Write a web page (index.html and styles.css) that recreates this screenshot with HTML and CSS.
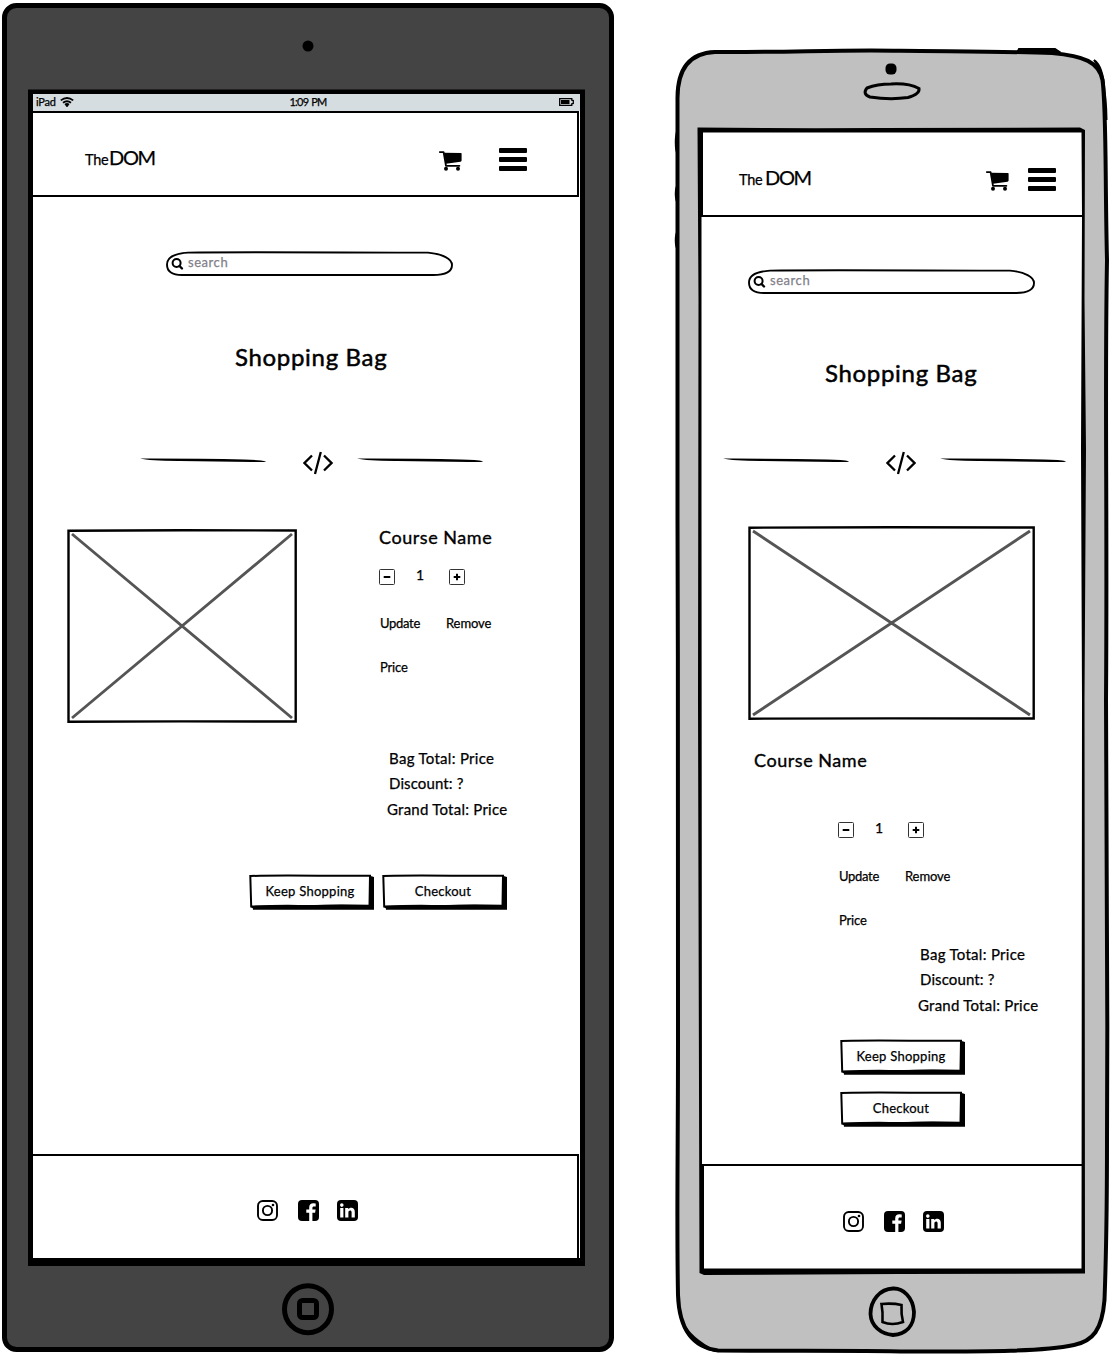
FILE: index.html
```html
<!DOCTYPE html>
<html lang="en">
<head>
<meta charset="utf-8">
<title>TheDOM - Shopping Bag</title>
<link rel="stylesheet" href="styles.css">
</head>
<body>
<svg class="sprite" aria-hidden="true">
  <symbol id="cart" viewBox="0 0 23 20">
    <path d="M0.8 1.1H4.6L7 14.8H20.4" fill="none" stroke="#000" stroke-width="1.8" stroke-linejoin="round" stroke-linecap="round"/>
    <path d="M5 1.8L22 2.1Q22.7 2.2 22.6 3V9.600Q22.500 10.600 21.500 10.800L7 12.800Z"/>
    <circle cx="7" cy="17.800" r="2"/><circle cx="19" cy="17.800" r="2"/>
  </symbol>
  <symbol id="menu" viewBox="0 0 28 23">
    <rect width="28" height="5" rx="1"/><rect y="9" width="28" height="5" rx="1"/><rect y="18" width="28" height="5" rx="1"/>
  </symbol>
  <symbol id="pill" viewBox="0 0 287 25">
    <path d="M22 1.6C70 .8 200 1.7 262 1.6C277 3 286 8 286 14C286 20 280 24 267 24H16C6 24 1 20 1 13.5C1 7 8 2.5 22 1.6Z" fill="#fff" stroke="#000" stroke-width="1.9"/>
    <circle cx="10.6" cy="12" r="4" fill="none" stroke="#000" stroke-width="2"/>
    <path d="M13.5 15L16 17.5" stroke="#000" stroke-width="2.4" stroke-linecap="round"/>
  </symbol>
  <symbol id="stroke" viewBox="0 0 126 6">
    <path d="M0 .6Q60 .5 104 1.500Q120 1.900 126 3.200Q125 4.400 112 4L40 3Q10 3.100 0 .6Z"/>
  </symbol>
  <symbol id="code" viewBox="0 0 30 24">
    <path d="M9 4.500L1.500 12L9 19.500M21 4.500L28.500 12L21 19.500M17.800 1L12 23" fill="none" stroke="#000" stroke-width="2.300"/>
  </symbol>
  <symbol id="minus" viewBox="0 0 16 16">
    <rect x=".5" y=".5" width="15" height="15" rx="1" fill="#fff" stroke="#333"/><path d="M4.7 8H11.3" stroke="#000" stroke-width="2"/>
  </symbol>
  <symbol id="plus" viewBox="0 0 16 16">
    <rect x=".5" y=".5" width="15" height="15" rx="1" fill="#fff" stroke="#333"/><path d="M4.7 8H11.3M8 4.7V11.3" stroke="#000" stroke-width="2"/>
  </symbol>
  <symbol id="box" viewBox="0 0 125 36">
    <path d="M3 30H120V1.500L125 3V35.700H4Z"/>
    <path d="M1.300 2C30 1 90 2.200 121 1.700L120.500 31.500L2.200 32.500Z" fill="#fff" stroke="#000" stroke-width="2"/>
    <path d="M2.500 32Q30 30.200 60 31.200Q90 30 120 31V34H2.500Z"/>
  </symbol>
  <symbol id="instagram" viewBox="0 0 21 21">
    <rect x="1" y="1" width="19" height="19" rx="4.8" fill="none" stroke="#000" stroke-width="1.9"/>
    <circle cx="10.5" cy="10.5" r="4.6" fill="none" stroke="#000" stroke-width="1.9"/><circle cx="16" cy="5" r="1.3"/>
  </symbol>
  <symbol id="facebook" viewBox="0 0 21 21">
    <rect width="21" height="21" rx="4"/>
    <path d="M11.2 21V12.8H8.3V9.6H11.2V7.5C11.2 4.7 12.8 3.3 15.3 3.3L17.7 3.5V6.4H16.1C14.7 6.4 14.4 7 14.4 8V9.6H17.6L17.1 12.8H14.4V21Z" fill="#fff"/>
  </symbol>
  <symbol id="linkedin" viewBox="0 0 21 21">
    <rect width="21" height="21" rx="4"/>
    <circle cx="4.8" cy="5.1" r="1.8" fill="#fff"/>
    <path d="M3.2 8H6.4V17.5H3.2ZM8.2 8H11.2V9.3C12.8 7 17.8 7 17.8 11.7V17.5H14.6V12.3C14.6 9.6 11.4 9.9 11.4 12.3V17.5H8.2Z" fill="#fff"/>
  </symbol>
</svg>

<section class="device tablet">
  <svg class="shell" viewBox="0 0 660 1354">
    <rect x="4.5" y="5.5" width="607" height="1344" rx="12" fill="#444" stroke="#000" stroke-width="5"/>
    <circle cx="308" cy="46" r="5.5"/>
    <rect x="28" y="89.5" width="557" height="1176.5"/>
    <rect x="33" y="94" width="547" height="1164" fill="#fff"/>
    <circle cx="308" cy="1309.2" r="23.5" fill="none" stroke="#000" stroke-width="5"/>
    <rect x="299.5" y="1300.5" width="17" height="17" rx="3" fill="none" stroke="#000" stroke-width="5"/>
  </svg>
  <div class="screen">
    <div class="status">
      <span class="carrier">iPad
        <svg width="14" height="10" viewBox="0 0 14 10"><path d="M.8 3.400Q7 -1.500 13.200 3.400M3 5.800Q7 2.600 11 5.800M5 7.800Q7 6.200 9 7.800" fill="none" stroke="#000" stroke-width="1.800"/><circle cx="7" cy="8.600" r="1.300"/></svg>
      </span>
      <span class="clock">1:09 PM</span>
      <svg class="battery" width="15" height="8" viewBox="0 0 15 8"><path d="M.7 .7H12.8V2.2L14.3 2.6V5.4L12.8 5.8V7.3H.7Z" fill="none" stroke="#000" stroke-width="1.300"/><rect x="2" y="2" width="8.500" height="4"/></svg>
    </div>
    <header class="bar">
      <div class="logo"><span class="the">The</span><span class="dom">DOM</span></div>
      <svg class="cart"><use href="#cart"/></svg>
      <svg class="menu"><use href="#menu"/></svg>
    </header>
    <main>
      <div class="search"><svg><use href="#pill"/></svg><span>search</span></div>
      <h1>Shopping Bag</h1>
      <div class="divider"><svg class="rule"><use href="#stroke"/></svg><svg class="code"><use href="#code"/></svg><svg class="rule"><use href="#stroke"/></svg></div>
      <div class="product">
        <svg class="photo" viewBox="0 0 230 194"><path d="M1.5 1.7L115 1.2L228.7 1.5V192.5L115 192.4L1.5 192.7Z" fill="#fff" stroke="#000" stroke-width="2.4"/><path d="M5 5L225 189M225 5L5 189" stroke="#555" stroke-width="2.9"/></svg>
        <div class="info">
          <h2>Course Name</h2>
          <div class="details">
            <div class="qty"><svg><use href="#minus"/></svg><span>1</span><svg><use href="#plus"/></svg></div>
            <div class="actions"><span class="update">Update</span><span class="remove">Remove</span></div>
            <div class="price">Price</div>
          </div>
        </div>
      </div>
      <div class="totals"><p class="bagtotal">Bag Total: Price</p><p class="discount">Discount: ?</p><p class="grand">Grand Total: Price</p></div>
      <div class="buttons">
        <div class="button"><svg><use href="#box"/></svg><span class="keep">Keep Shopping</span></div>
        <div class="button"><svg><use href="#box"/></svg><span class="checkout">Checkout</span></div>
      </div>
    </main>
    <footer><svg><use href="#instagram"/></svg><svg><use href="#facebook"/></svg><svg><use href="#linkedin"/></svg></footer>
  </div>
</section>

<section class="device phone">
  <svg class="shell" viewBox="660 0 450 1354">
    <path d="M1018 51L1019 49H1055L1058 51ZM678 130C675 134 675 150 678 155ZM678 185C675 187 675 200 678 203ZM678 231C675 234 675 247 678 249Z" stroke="#000" stroke-width="2"/>
    <path d="M677.500 100C677 70 689 53 715 52C790 52.500 840 49.500 900 50.800C960 51.500 1010 51.500 1052 53C1084 56 1099 62 1102.500 80C1106.500 110 1105 180 1107 260C1104.500 400 1107.500 500 1106 700C1106.500 900 1108 1000 1107 1140C1107 1230 1106 1260 1104.500 1300C1102 1330 1093 1341 1074 1345C1040 1352 980 1351.500 910 1351.500C850 1350 780 1351 718 1350.500C690 1347 679 1325 678 1295C676.500 1220 678 1160 678 1040C677 900 678.500 700 677.500 520C678.500 400 678.500 250 677.500 100Z" fill="#c0c0c0" stroke="#000" stroke-width="4"/>
    <path d="M682 1322Q690 1345 715 1351Q691 1339 682 1322ZM1094 60Q1103 66 1104.500 90L1106.500 120Q1106 75 1094 60Z" stroke="#000" stroke-width="2"/>
    <rect x="885.500" y="63.500" width="11" height="11" rx="4.500"/>
    <path d="M867 88Q877 84 891 84Q909 83 919 88.500Q920 94 908 97.500Q890 100 870 97Q862 94 867 88Z" fill="none" stroke="#000" stroke-width="3"/>
    <path d="M697.500 127.500Q780 128.500 880 128L1080 127.500L1085 130L1084.500 300L1086 450L1084.500 700L1085 1273.500L900 1274L704 1275L699.500 1273L698.500 900L698 700L698.500 300Z"/>
    <path d="M703 132.500H1081.500L1082 216L1081 450L1082 700L1081.500 1268.500H704L702 1164L701.500 500L701.500 217H703Z" fill="#fff"/>
    <path d="M893 1288.500C880 1289 870.500 1300 870.500 1314C871 1326 881 1334 893 1335C906 1334 914 1326 914 1312C913 1297 903 1288 893 1288.500Z" fill="none" stroke="#000" stroke-width="3.800"/>
    <path d="M881.500 1304Q893 1303 901.500 1305Q901 1314 903 1322Q892 1326 882.500 1322Q883 1312 881.500 1304Z" fill="none" stroke="#000" stroke-width="2.600"/>
  </svg>
  <div class="screen">
    <header class="bar">
      <div class="logo"><span class="the">The</span><span class="dom">DOM</span></div>
      <svg class="cart"><use href="#cart"/></svg>
      <svg class="menu"><use href="#menu"/></svg>
    </header>
    <main>
      <div class="search"><svg><use href="#pill"/></svg><span>search</span></div>
      <h1>Shopping Bag</h1>
      <div class="divider"><svg class="rule"><use href="#stroke"/></svg><svg class="code"><use href="#code"/></svg><svg class="rule"><use href="#stroke"/></svg></div>
      <svg class="photo" viewBox="0 0 287 194"><path d="M1.500 1.700L143 1.200L285.700 1.500V192.500L143 192.400L1.500 192.700Z" fill="#fff" stroke="#000" stroke-width="2.400"/><path d="M5 5L282 189M282 5L5 189" stroke="#555" stroke-width="2.900"/></svg>
      <h2>Course Name</h2>
      <div class="details">
        <div class="qty"><svg><use href="#minus"/></svg><span>1</span><svg><use href="#plus"/></svg></div>
        <div class="actions"><span class="update">Update</span><span class="remove">Remove</span></div>
        <div class="price">Price</div>
      </div>
      <div class="totals"><p class="bagtotal">Bag Total: Price</p><p class="discount">Discount: ?</p><p class="grand">Grand Total: Price</p></div>
      <div class="buttons">
        <div class="button"><svg><use href="#box"/></svg><span class="keep">Keep Shopping</span></div>
        <div class="button"><svg><use href="#box"/></svg><span class="checkout">Checkout</span></div>
      </div>
    </main>
    <footer><svg><use href="#instagram"/></svg><svg><use href="#facebook"/></svg><svg><use href="#linkedin"/></svg></footer>
  </div>
</section>
</body>
</html>
```
FILE: styles.css
```css
* { box-sizing: border-box; }
body {
  margin: 0;
  width: 1110px;
  height: 1354px;
  display: flex;
  overflow: hidden;
  background: #fff;
  color: #000;
  font: 13px/20px Lato, "Open Sans", sans-serif;
  -webkit-text-stroke: 0.25px;
}
svg { display: block; flex: none; }
h1, h2, p { margin: 0; font-weight: 400; white-space: nowrap; }
.sprite { display: none; }

/* Device shells: the outline and the screen share one grid cell */
.device { display: grid; height: 1354px; align-items: start; justify-items: start; }
.shell, .screen { grid-area: 1 / 1; }
.shell { height: 1354px; width: 100%; }
.tablet { width: 660px; }
.phone { width: 450px; }
.tablet .screen { margin: 94px 0 0 31px; width: 548px; }
.phone .screen { margin: 131px 0 0 42px; width: 380px; }

/* Status bar */
.status {
  height: 17px;
  margin: 0 -1px 0 2px;
  padding: 0 6px 2px 3px;
  background: #d6dde0;
  display: grid;
  grid-template-columns: 1fr auto 1fr;
  align-items: center;
  font-size: 11px;
  line-height: 15px;
}
.carrier { display: flex; align-items: center; gap: 4px; height: 15px; letter-spacing: -0.2px; }
.carrier svg { margin-top: 1px; }
.clock { letter-spacing: -0.8px; margin: 0 -3px 0 3px; word-spacing: 1px; }
.battery { justify-self: end; margin-top: 1px; }

/* Header */
.bar { height: 86px; display: flex; align-items: flex-start; padding-top: 30px; border: 2px solid #000; }
.phone .bar { padding-top: 32px; border-width: 0 0 2px; }
.logo { display: flex; align-items: baseline; line-height: 28px; }
.the { font-size: 14.5px; width: 24px; letter-spacing: -0.3px; }
.dom { font-size: 20px; width: 46px; letter-spacing: -1.3px; }
.tablet .logo { margin: 0 284px 0 52px; }
.phone .logo { margin: 0 175px 0 37px; gap: 2px; }
.cart { width: 23px; height: 20px; margin-top: 8px; }
.menu { width: 28px; height: 23px; margin: 5px 0 0 37px; }
.phone .menu { margin-left: 19px; }

/* Content */
.search { display: grid; width: 287px; height: 25px; }
.search svg { grid-area: 1 / 1; width: 287px; height: 25px; }
.search span { grid-area: 1 / 1; margin: 1px 0 0 22px; color: #83808a; letter-spacing: 0.55px; }
h1 { font-size: 24px; line-height: 30px; letter-spacing: 0.68px; -webkit-text-stroke: 0.5px; }
h2 { font-size: 18px; line-height: 24px; letter-spacing: 0.55px; -webkit-text-stroke: 0.35px; }
.divider { display: flex; align-items: flex-start; height: 24px; }
.rule { width: 126px; height: 6px; margin-top: 7px; }
.code { width: 30px; height: 24px; margin: 0 24px 0 37px; }

.qty { display: flex; height: 16px; line-height: 16px; font-size: 14px; }
.qty svg { width: 16px; height: 16px; }
.qty span { width: 54px; padding-left: 21px; margin-top: -2px; }
.actions { display: flex; margin: 28px 0 0 1px; }
.update { width: 66px; letter-spacing: -0.3px; }
.remove { letter-spacing: -0.1px; }
.price { margin: 24px 0 0 1px; letter-spacing: -0.15px; }

.totals { font-size: 15px; letter-spacing: 0.3px; }
.discount { margin: 5px 0 6px; letter-spacing: 0.12px; }
.grand { margin-left: -2px; letter-spacing: 0.24px; }
.buttons { display: flex; }
.button { display: grid; width: 125px; height: 36px; }
.button svg { grid-area: 1 / 1; width: 125px; height: 36px; }
.button span { grid-area: 1 / 1; width: 122px; margin-top: 7px; text-align: center; letter-spacing: 0.26px; }

footer { display: flex; }
footer svg { width: 21px; height: 21px; }
footer svg + svg { margin-left: 20px; }
footer svg:last-child { margin-left: 18px; }

.tablet main { height: 957px; padding-top: 54px; }
.tablet .search { margin-left: 135px; }
.tablet h1 { margin: 66px 0 79px 204px; }
.tablet .divider { margin: 0 0 50px 109px; }
.product { display: flex; padding-left: 36px; height: 198px; }
.tablet .photo { width: 230px; height: 194px; margin-top: 4px; }
.info { margin-left: 82px; }
.tablet .details { margin-top: 20px; }
.tablet .totals { margin: 25px 0 55px 358px; }
.tablet .buttons { margin-left: 218px; gap: 8px; }
.tablet footer { height: 106px; border: 2px solid #000; padding: 44px 0 0 224px; }

.phone main { height: 947px; padding-top: 52px; }
.phone .search { margin-left: 46px; }
.phone h1 { margin: 64px 0 63px 123px; }
.phone .divider { margin: 0 0 51px 21px; }
.phone .photo { width: 287px; height: 194px; margin-left: 46px; }
.phone h2 { margin: 28px 0 50px 52px; }
.phone .details { margin-left: 136px; }
.phone .totals { margin: 14px 0 24px 218px; }
.phone .buttons { flex-direction: column; gap: 16px; margin-left: 138px; }
.phone footer { height: 105px; border: solid #000; border-width: 2px 0 0 2px; padding: 45px 0 0 139px; }
```
